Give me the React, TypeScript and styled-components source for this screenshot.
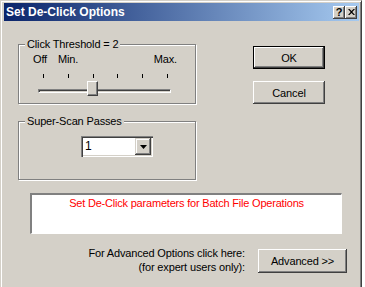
import styled, { createGlobalStyle } from "styled-components";

const face = "#d4d0c8";

const GlobalStyle = createGlobalStyle`
  html, body {
    margin: 0;
    padding: 0;
    background: #fff;
    overflow: hidden;
  }
  body {
    font-family: "Liberation Sans", Arial, sans-serif;
    font-size: 11px;
    letter-spacing: -0.15px;
    color: #000;
  }
`;

const Window = styled.div`
  width: 362px;
  height: 300px;
  box-sizing: border-box;
  background: ${face};
  border: 1px solid;
  border-color: ${face} #404040 #404040 ${face};
  box-shadow: inset 1px 1px 0 #fff, inset -1px -1px 0 #808080;
  padding: 2px 2px 0 3px;
`;

const TitleBar = styled.div`
  height: 18px;
  display: flex;
  align-items: center;
  padding: 0 2px 0 2px;
  background: linear-gradient(to right, #0a246a, #a6caf0);
`;

const TitleText = styled.span`
  color: #fff;
  font-weight: bold;
  font-size: 12px;
  letter-spacing: 0;
`;

const CaptionButtons = styled.div`
  margin-left: auto;
  display: flex;
`;

const CaptionButton = styled.div`
  width: 12px;
  height: 13px;
  box-sizing: border-box;
  background: ${face};
  display: flex;
  align-items: center;
  justify-content: center;
  box-shadow: inset -1px -1px 0 #404040, inset 1px 1px 0 #fff,
    inset -2px -2px 0 #808080;
  font-weight: bold;
  font-size: 11px;
  line-height: 1;
  letter-spacing: 0;
`;

const Client = styled.div`
  padding: 17px 12px 0 14px;
`;

const TopArea = styled.div`
  display: flex;
  align-items: flex-start;
`;

const LeftCol = styled.div`
  width: 178px;
  display: flex;
  flex-direction: column;
`;

const GroupBox = styled.fieldset<{ $padBottom: number; $mt?: number }>`
  margin: ${(p) => p.$mt ?? 0}px 0 0 0;
  padding: 0 0 ${(p) => p.$padBottom}px 0;
  min-width: 0;
  border: 1px solid #808080;
  box-shadow: 1px 1px 0 #fff, inset 1px 1px 0 #fff;
`;

const Legend = styled.legend`
  margin-left: 6px;
  padding: 0 2px;
  line-height: 13px;
  background: ${face};
`;

const ScaleLabels = styled.div`
  display: flex;
  line-height: 13px;
  padding: 2px 18px 0 14px;
`;

const MinLabel = styled.span`
  margin-left: 11px;
`;

const MaxLabel = styled.span`
  margin-left: auto;
`;

const TickRow = styled.div`
  display: flex;
  justify-content: space-between;
  width: 125px;
  height: 4px;
  margin: 8px 0 0 24px;
`;

const Tick = styled.div`
  width: 1px;
  height: 4px;
  background: #000;
`;

const SliderArea = styled.div`
  position: relative;
  height: 14px;
  box-sizing: border-box;
  margin-top: 3px;
  padding: 8px 0 0 19px;
`;

const Track = styled.div`
  width: 133px;
  height: 4px;
  box-sizing: border-box;
  border-top: 1px solid #808080;
  border-left: 1px solid #808080;
  border-bottom: 1px solid #fff;
  border-right: 1px solid #fff;
  box-shadow: inset 1px 1px 0 #404040;
`;

const Thumb = styled.div`
  position: absolute;
  top: 0;
  width: 11px;
  height: 15px;
  box-sizing: border-box;
  background: ${face};
  border-top: 1px solid #fff;
  border-left: 1px solid #fff;
  border-right: 1px solid #404040;
  border-bottom: 1px solid #404040;
  box-shadow: inset -1px -1px 0 #808080;
`;

const Combo = styled.div`
  display: flex;
  width: 72px;
  height: 21px;
  margin: 8px 0 0 62px;
  box-sizing: border-box;
  padding: 2px;
  background: #fff;
  box-shadow: inset 1px 1px 0 #808080, inset 2px 2px 0 #404040,
    inset -1px -1px 0 #fff, inset -2px -2px 0 ${face};
`;

const ComboValue = styled.div`
  flex: 1;
  padding-left: 2px;
  line-height: 17px;
  font-size: 12px;
`;

const DropButton = styled.div`
  width: 16px;
  height: 17px;
  box-sizing: border-box;
  background: ${face};
  display: flex;
  align-items: center;
  justify-content: center;
  box-shadow: inset -1px -1px 0 #404040, inset 1px 1px 0 ${face},
    inset -2px -2px 0 #808080, inset 2px 2px 0 #fff;
`;

const RightCol = styled.div`
  display: flex;
  flex-direction: column;
  gap: 12px;
  margin-left: 57px;
  padding-top: 8px;
`;

const Button = styled.button<{ $isDefault?: boolean; $w: number; $h: number; $mt?: number }>`
  width: ${(p) => p.$w}px;
  height: ${(p) => p.$h}px;
  box-sizing: border-box;
  margin: ${(p) => p.$mt ?? 0}px 0 0 0;
  padding: 0;
  border: ${(p) => (p.$isDefault ? "1px solid #000" : "none")};
  background: ${face};
  font-family: "Liberation Sans", Arial, sans-serif;
  font-size: 11px;
  letter-spacing: -0.15px;
  color: #000;
  box-shadow: inset -1px -1px 0 #404040, inset 1px 1px 0 #fff,
    inset -2px -2px 0 #808080, inset 2px 2px 0 ${face};
`;

const StatusBox = styled.div`
  width: 312px;
  height: 41px;
  box-sizing: border-box;
  margin: 13px 0 0 12px;
  padding-top: 2px;
  background: #fff;
  border-top: 2px solid #808080;
  border-left: 2px solid #808080;
  border-right: 1px solid #fff;
  border-bottom: 1px solid #fff;
  color: #ff0000;
  text-align: center;
  line-height: 13px;
  letter-spacing: -0.2px;
`;

const BottomRow = styled.div`
  display: flex;
  justify-content: flex-end;
  align-items: flex-start;
  margin-top: 12px;
`;

const HelpText = styled.div`
  text-align: right;
  line-height: 14px;
  margin-right: 13px;
`;

const ticks = [0, 1, 2, 3, 4, 5];
const threshold = 2;

export default function App() {
  const thumbLeft = 24 + threshold * 24.8 - 5.5;
  return (
    <>
      <GlobalStyle />
      <Window>
        <TitleBar>
          <TitleText>Set De-Click Options</TitleText>
          <CaptionButtons>
            <CaptionButton>?</CaptionButton>
            <CaptionButton>
              <svg width="7" height="6" viewBox="0 0 7 6">
                <path d="M0 0 L1.5 0 L3.5 2 L5.5 0 L7 0 L4.3 3 L7 6 L5.5 6 L3.5 4 L1.5 6 L0 6 L2.7 3 Z" fill="#000" />
              </svg>
            </CaptionButton>
          </CaptionButtons>
        </TitleBar>
        <Client>
          <TopArea>
            <LeftCol>
              <GroupBox $padBottom={8}>
                <Legend>Click Threshold = {threshold}</Legend>
                <ScaleLabels>
                  <span>Off</span>
                  <MinLabel>Min.</MinLabel>
                  <MaxLabel>Max.</MaxLabel>
                </ScaleLabels>
                <TickRow>
                  {ticks.map((t) => (
                    <Tick key={t} />
                  ))}
                </TickRow>
                <SliderArea>
                  <Track />
                  <Thumb style={{ left: Math.round(thumbLeft) }} />
                </SliderArea>
              </GroupBox>
              <GroupBox $padBottom={22} $mt={11}>
                <Legend>Super-Scan Passes</Legend>
                <Combo>
                  <ComboValue>1</ComboValue>
                  <DropButton>
                    <svg width="7" height="4" viewBox="0 0 7 4">
                      <path d="M0 0 L7 0 L3.5 4 Z" fill="#000" />
                    </svg>
                  </DropButton>
                </Combo>
              </GroupBox>
            </LeftCol>
            <RightCol>
              <Button $isDefault $w={72} $h={23}>
                OK
              </Button>
              <Button $w={72} $h={23}>
                Cancel
              </Button>
            </RightCol>
          </TopArea>
          <StatusBox>Set De-Click parameters for Batch File Operations</StatusBox>
          <BottomRow>
            <HelpText>
              For Advanced Options click here:
              <br />
              (for expert users only):
            </HelpText>
            <Button $w={89} $h={24} $mt={3}>
              Advanced &gt;&gt;
            </Button>
          </BottomRow>
        </Client>
      </Window>
    </>
  );
}
